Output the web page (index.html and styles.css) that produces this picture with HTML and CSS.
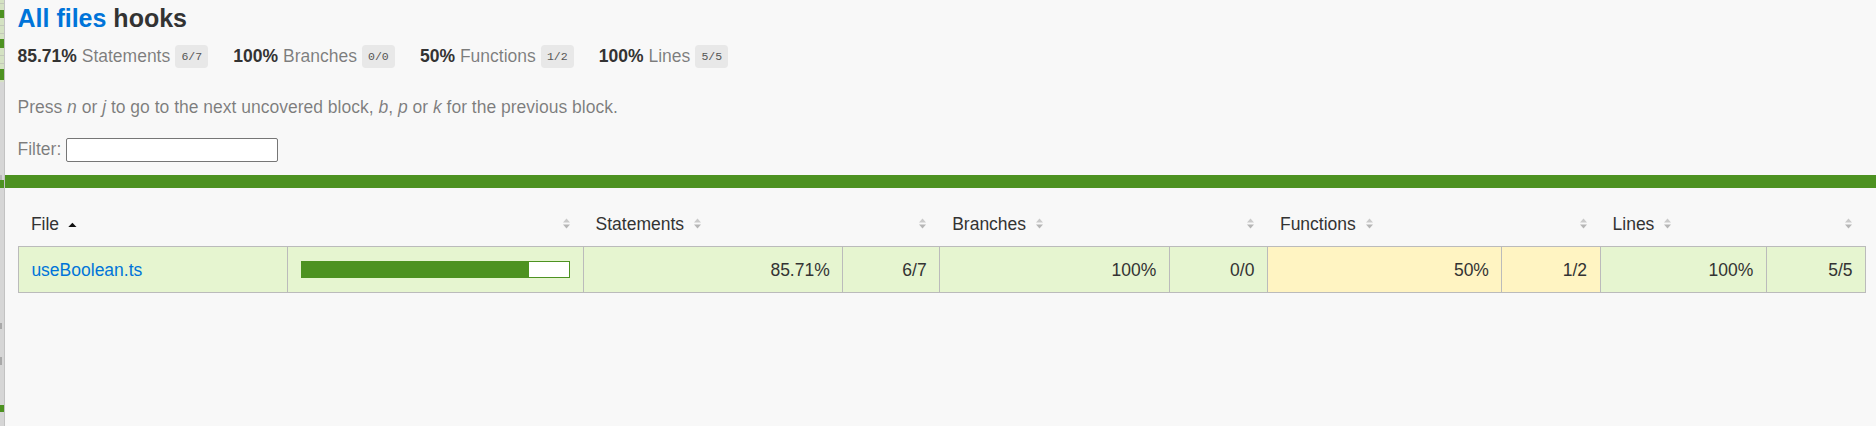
FILE: index.html
```html
<!DOCTYPE html>
<html lang="en">
<head>
<meta charset="utf-8">
<title>Code coverage report for hooks</title>
<link rel="stylesheet" href="styles.css">
</head>
<body>
<div class="app">
  <svg class="edge" width="5" height="426" viewBox="0 0 5 426" aria-hidden="true">
    <rect x="0" y="0" width="5" height="426" fill="#d6d6d6"/>
    <rect x="0" y="0" width="4" height="82" fill="#d4e2c2"/>
    <rect x="0" y="3" width="4" height="1" fill="#c2c9b8"/>
    <rect x="0" y="10" width="4" height="8" fill="#4d9221"/>
    <rect x="0" y="25" width="4" height="1" fill="#c2c9b8"/>
    <rect x="0" y="33" width="4" height="1" fill="#c2c9b8"/>
    <rect x="0" y="39" width="4" height="9" fill="#4d9221"/>
    <rect x="0" y="55" width="4" height="1" fill="#c2c9b8"/>
    <rect x="0" y="63" width="4" height="1" fill="#c2c9b8"/>
    <rect x="0" y="69" width="4" height="11" fill="#4d9221"/>
    <rect x="0" y="175" width="2" height="5" fill="#b9b9b9"/>
    <rect x="0" y="180" width="4" height="8" fill="#4d9221"/>
    <rect x="0" y="323" width="2" height="6" fill="#a9a9a9"/>
    <rect x="0" y="357" width="2" height="8" fill="#a9a9a9"/>
    <rect x="0" y="405" width="4" height="7" fill="#4d9221"/>
    <rect x="4" y="0" width="1" height="426" fill="#c2c2c2"/>
  </svg>
  <div class="page">
    <div class="head">
      <h1 class="title"><a class="link" href="#">All files</a> hooks</h1>
      <div class="stats">
        <div class="stat"><span class="strong">85.71% </span> <span class="quiet">Statements</span> <span class="fraction">6/7</span></div>
        <div class="stat"><span class="strong">100% </span> <span class="quiet">Branches</span> <span class="fraction">0/0</span></div>
        <div class="stat"><span class="strong">50% </span> <span class="quiet">Functions</span> <span class="fraction">1/2</span></div>
        <div class="stat"><span class="strong">100% </span> <span class="quiet">Lines</span> <span class="fraction">5/5</span></div>
      </div>
      <p class="quiet hint">Press <em>n</em> or <em>j</em> to go to the next uncovered block, <em>b</em>, <em>p</em> or <em>k</em> for the previous block.</p>
      <div class="quiet filter"><span>Filter:</span><input type="search" class="search" aria-label="Filter"></div>
    </div>
    <div class="status-line high-fill"></div>
    <div class="body">
      <table class="coverage-summary">
        <colgroup>
          <col class="c-file"><col class="c-pic">
          <col class="c-spct"><col class="c-sabs">
          <col class="c-bpct"><col class="c-babs">
          <col class="c-fpct"><col class="c-fabs">
          <col class="c-lpct"><col class="c-labs">
        </colgroup>
        <thead>
          <tr>
            <th class="file">File<span class="sorter"><svg viewBox="0 0 9 13" width="9" height="13"><polygon points="0.3,10 4.4,5.8 8.5,10" fill="#111"/></svg></span></th>
            <th class="pic"><span class="sorter"><svg viewBox="0 0 9 13" width="9" height="13"><polygon points="1,5.5 4.5,1.5 8,5.5" fill="#cacaca"/><polygon points="1,7.5 4.5,11.5 8,7.5" fill="#b6b6b6"/></svg></span></th>
            <th class="pct">Statements<span class="sorter"><svg viewBox="0 0 9 13" width="9" height="13"><polygon points="1,5.5 4.5,1.5 8,5.5" fill="#cacaca"/><polygon points="1,7.5 4.5,11.5 8,7.5" fill="#b6b6b6"/></svg></span></th>
            <th class="abs"><span class="sorter"><svg viewBox="0 0 9 13" width="9" height="13"><polygon points="1,5.5 4.5,1.5 8,5.5" fill="#cacaca"/><polygon points="1,7.5 4.5,11.5 8,7.5" fill="#b6b6b6"/></svg></span></th>
            <th class="pct">Branches<span class="sorter"><svg viewBox="0 0 9 13" width="9" height="13"><polygon points="1,5.5 4.5,1.5 8,5.5" fill="#cacaca"/><polygon points="1,7.5 4.5,11.5 8,7.5" fill="#b6b6b6"/></svg></span></th>
            <th class="abs"><span class="sorter"><svg viewBox="0 0 9 13" width="9" height="13"><polygon points="1,5.5 4.5,1.5 8,5.5" fill="#cacaca"/><polygon points="1,7.5 4.5,11.5 8,7.5" fill="#b6b6b6"/></svg></span></th>
            <th class="pct">Functions<span class="sorter"><svg viewBox="0 0 9 13" width="9" height="13"><polygon points="1,5.5 4.5,1.5 8,5.5" fill="#cacaca"/><polygon points="1,7.5 4.5,11.5 8,7.5" fill="#b6b6b6"/></svg></span></th>
            <th class="abs"><span class="sorter"><svg viewBox="0 0 9 13" width="9" height="13"><polygon points="1,5.5 4.5,1.5 8,5.5" fill="#cacaca"/><polygon points="1,7.5 4.5,11.5 8,7.5" fill="#b6b6b6"/></svg></span></th>
            <th class="pct">Lines<span class="sorter"><svg viewBox="0 0 9 13" width="9" height="13"><polygon points="1,5.5 4.5,1.5 8,5.5" fill="#cacaca"/><polygon points="1,7.5 4.5,11.5 8,7.5" fill="#b6b6b6"/></svg></span></th>
            <th class="abs"><span class="sorter"><svg viewBox="0 0 9 13" width="9" height="13"><polygon points="1,5.5 4.5,1.5 8,5.5" fill="#cacaca"/><polygon points="1,7.5 4.5,11.5 8,7.5" fill="#b6b6b6"/></svg></span></th>
          </tr>
        </thead>
        <tbody>
          <tr>
            <td class="file high"><a class="link" href="#">useBoolean.ts</a></td>
            <td class="pic high"><div class="chart"><div class="cover-fill" style="width: 85%"></div><div class="cover-empty" style="width: 15%"></div></div></td>
            <td class="pct high">85.71%</td>
            <td class="abs high">6/7</td>
            <td class="pct high">100%</td>
            <td class="abs high">0/0</td>
            <td class="pct medium">50%</td>
            <td class="abs medium">1/2</td>
            <td class="pct high">100%</td>
            <td class="abs high">5/5</td>
          </tr>
        </tbody>
      </table>
    </div>
  </div>
</div>
</body>
</html>
```

FILE: styles.css
```css
*, *::before, *::after { box-sizing: border-box; }

html, body {
  margin: 0;
  padding: 0;
}

body {
  background: #f8f8f8;
  font-family: "Liberation Sans", Arial, Helvetica, sans-serif;
  font-size: 17.5px;
  color: #333;
}

.app {
  display: flex;
  min-height: 426px;
}

.edge {
  flex: 0 0 5px;
  display: block;
}

.page {
  flex: 1 1 auto;
  min-width: 0;
}

.head {
  padding: 3px 12.5px 10.5px 12.5px;
}

.title {
  margin: 0;
  font-size: 25px;
  line-height: 31px;
  font-weight: bold;
}

.link {
  color: #0074d9;
  text-decoration: none;
}

.stats {
  display: flex;
}

.stat {
  padding: 12px 25px 12.5px 0;
  line-height: 20px;
}

.strong { font-weight: bold; }

.quiet { color: rgba(0, 0, 0, 0.5); }

.fraction {
  font-family: "Liberation Mono", Consolas, monospace;
  font-size: 11.5px;
  color: #555;
  background: #e8e8e8;
  padding: 5px 6.25px;
  border-radius: 3.75px;
  vertical-align: middle;
}

.hint {
  margin: 17.5px 0;
  line-height: 20px;
}

.filter {
  display: flex;
  align-items: center;
  gap: 5px;
  height: 30px;
}

.search {
  width: 212px;
  height: 24px;
  margin: 0;
  padding: 0 4px;
  border: 1px solid #767676;
  border-radius: 2px;
  background: #fff;
  font: inherit;
}

.status-line {
  height: 12.5px;
}

.high-fill { background: rgb(77, 146, 33); }

.body {
  padding: 13.5px 10px 12.5px 12.9px;
}

.coverage-summary {
  border-collapse: collapse;
  width: 100%;
  table-layout: fixed;
}

.c-file { width: 269.2px; }
.c-pic  { width: 295.5px; }
.c-spct { width: 259.7px; }
.c-sabs { width: 96.9px; }
.c-bpct { width: 229.7px; }
.c-babs { width: 98.1px; }
.c-fpct { width: 234.5px; }
.c-fabs { width: 98.1px; }
.c-lpct { width: 166.3px; }
.c-labs { width: auto; }

.coverage-summary tr { border-bottom: 1px solid #bbb; }
.coverage-summary thead tr { border-bottom: none; }

.coverage-summary tbody { border: 1px solid #bbb; }

.coverage-summary th,
.coverage-summary td {
  padding: 12.5px;
  line-height: 20px;
  vertical-align: top;
}

.coverage-summary th {
  text-align: left;
  font-weight: normal;
  white-space: nowrap;
}

.coverage-summary td { border-right: 1px solid #bbb; }
.coverage-summary td:last-child { border-right: none; }

.coverage-summary th.pic,
.coverage-summary th.abs,
.coverage-summary td.pct,
.coverage-summary td.abs { text-align: right; }

.coverage-summary td.file { white-space: nowrap; }

.sorter {
  display: inline-block;
  width: 9px;
  height: 13px;
  margin-left: 8.75px;
  vertical-align: baseline;
}

.sorter svg { display: block; }

.high { background: rgb(230, 245, 208); }
.medium { background: #fff4c2; }

.chart {
  line-height: 0;
  border: 1px solid rgb(77, 146, 33);
  margin-top: 1px;
  white-space: nowrap;
}

.cover-fill,
.cover-empty {
  display: inline-block;
  height: 15px;
  vertical-align: top;
}

.cover-fill { background: rgb(77, 146, 33); }
.cover-empty { background: #fff; }
```
